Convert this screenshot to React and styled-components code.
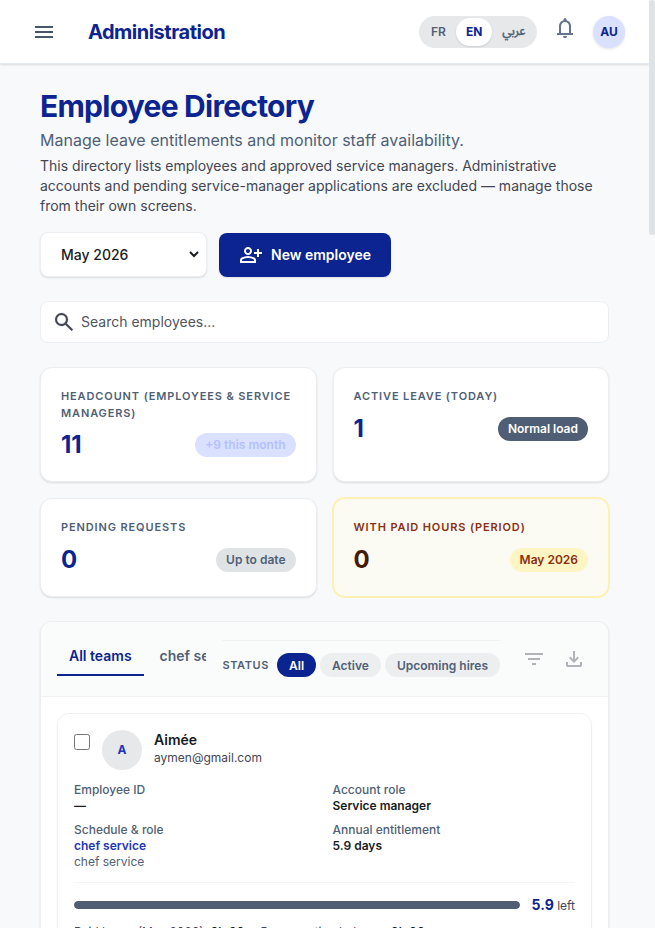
import React from 'react';
import styled, { createGlobalStyle } from 'styled-components';

const GlobalStyle = createGlobalStyle`
    * {
        box-sizing: border-box;
    }
    body {
        margin: 0;
        height: 928px;
        overflow: hidden;
        background: #f7f9fb;
        color: #191c1e;
        font-family: Inter, sans-serif;
        font-size: 14px;
        line-height: 20px;
    }
    h1, h2, p {
        margin: 0;
    }
    button, select, input {
        font-family: inherit;
    }
`
const Shell = styled.div`
    display: flex;
    height: 928px;
    overflow: hidden;
`
const Page = styled.div`
    flex: 1;
    min-width: 0;
    height: 928px;
    overflow: hidden;
`
const ScrollTrack = styled.div`
    width: 6px;
    flex: none;
`
const ScrollThumb = styled.div`
    height: 235px;
    border-radius: 10px;
    background: #e0e3e5;
`
const Svg = styled.svg`
    display: block;
    flex: none;
    width: 24px;
    height: 24px;
    fill: currentColor;
`
const TopBar = styled.header`
    height: 64px;
    display: flex;
    align-items: center;
    padding: 0 24px 0 32px;
    background: #fff;
    border-bottom: 1px solid #e2e8f0;
    box-shadow: 0 1px 2px rgba(0, 0, 0, 0.12);
    color: #475569;
`
const Brand = styled.h2`
    margin-left: 32px;
    flex: 1;
    font-size: 20px;
    line-height: 28px;
    font-weight: 700;
    letter-spacing: -0.5px;
    color: #0b2490;
`
const Languages = styled.div`
    display: flex;
    height: 32px;
    width: 118px;
    padding: 2px;
    border-radius: 16px;
    background: #e6e8ea;
`
const Language = styled.button`
    border: 0;
    padding: 0 10px;
    border-radius: 14px;
    font-size: 12px;
    font-weight: ${props => props.$active ? 700 : 600};
    color: ${props => props.$active ? '#0b2490' : '#505f76'};
    background: ${props => props.$active ? '#fff' : 'transparent'};
    box-shadow: ${props => props.$active ? '0 1px 2px rgba(0, 0, 0, 0.12)' : 'none'};
`
const Arabic = styled(Language)`
    font-family: "Noto Sans Arabic", "Noto Kufi Arabic", "Open Sans", sans-serif;
    font-size: 12px;
    -webkit-text-stroke: 0.3px currentColor;
    font-weight: 500;
`
const Bell = styled.div`
    margin: 0 16px;
    padding-bottom: 7px;
    color: #64748b;
`
const UserBadge = styled.div`
    width: 32px;
    height: 32px;
    display: flex;
    align-items: center;
    justify-content: center;
    border-radius: 50%;
    background: #dae0ff;
    box-shadow: 0 1px 3px rgba(0, 0, 0, 0.12);
    color: #0b2490;
    font-size: 12px;
    font-weight: 700;
`
const Main = styled.main`
    padding: 24px 40px;
`
const Title = styled.h1`
    font-size: 30px;
    line-height: 36px;
    font-weight: 700;
    letter-spacing: -0.75px;
    color: #0b2490;
`
const Subtitle = styled.p`
    margin-top: 4px;
    font-size: 16px;
    line-height: 24px;
    color: #505f76;
`
const Note = styled.p`
    margin-top: 4px;
    color: #444653;
`
const Actions = styled.div`
    display: flex;
    align-items: center;
    gap: 12px;
    margin-top: 16px;
`
const MonthBox = styled.div`
    display: flex;
    width: 167px;
    height: 45px;
    padding: 0 4px 0 16px;
    border: 1px solid #eceef2;
    border-radius: 8px;
    background: #fff;
    box-shadow: 0 1px 2px rgba(0, 0, 0, 0.12);
`
const MonthSelect = styled.select`
    flex: 1;
    padding: 0;
    border: 0;
    background: transparent;
    color: #191c1e;
    font-size: 14px;
    font-weight: 500;
`
const PrimaryButton = styled.button`
    display: flex;
    align-items: center;
    gap: 8px;
    height: 44px;
    padding: 0 20px;
    border: 0;
    border-radius: 8px;
    background: #0b2490;
    box-shadow: 0 1px 2px rgba(0, 0, 0, 0.1);
    color: #fff;
    font-size: 14px;
    font-weight: 600;
`
const SearchBox = styled.div`
    display: flex;
    align-items: center;
    gap: 5px;
    height: 42px;
    margin-top: 24px;
    padding: 0 11px;
    border: 1px solid #eceef2;
    border-radius: 8px;
    background: #fff;
    color: #444653;
`
const SearchInput = styled.input`
    flex: 1;
    padding: 0 0 2px;
    border: 0;
    outline: 0;
    background: transparent;
    font-size: 14px;
    &::placeholder {
        color: #505560;
    }
`
const Stats = styled.section`
    display: grid;
    grid-template-columns: 1fr 1fr;
    gap: 16px;
    margin-top: 24px;
`
const StatCard = styled.div`
    padding: 20px;
    border: 1px solid ${props => props.$warm ? '#fef0b4' : '#eceef2'};
    border-radius: 12px;
    background: ${props => props.$warm ? '#fbfaf3' : '#fff'};
    box-shadow: ${props => props.$warm ? '0 0 0 1px #fef0b4' : '0 1px 2px rgba(0, 0, 0, 0.12)'};
    color: ${props => props.$warm ? '#451a03' : '#0b2490'};
`
const StatLabel = styled.p`
    font-size: 11px;
    line-height: 16.5px;
    font-weight: 600;
    letter-spacing: 0.88px;
    text-transform: uppercase;
    color: ${props => props.$warm ? '#8a2f10' : '#505f76'};
`
const StatRow = styled.div`
    display: flex;
    align-items: center;
    justify-content: space-between;
    margin-top: 8px;
`
const StatValue = styled.span`
    font-size: 24px;
    line-height: 32px;
    font-weight: 700;
`
const pillTones = {
    faint: ['#dae0ff', '#b3c0ff'],
    slate: ['#4f5e75', '#fff'],
    grey: ['#e0e3e5', '#505f76'],
    amber: ['#fef5c5', '#8a2f10'],
}
const StatPill = styled.span`
    padding: 4px 10px;
    border-radius: 12px;
    font-size: 12px;
    line-height: 16px;
    font-weight: 600;
    background: ${props => pillTones[props.$tone][0]};
    color: ${props => pillTones[props.$tone][1]};
`
const Panel = styled.section`
    margin-top: 24px;
    border: 1px solid #eceef2;
    border-radius: 12px;
    background: #fff;
    box-shadow: 0 1px 2px rgba(0, 0, 0, 0.12);
    overflow: hidden;
`
const PanelHeader = styled.div`
    display: flex;
    align-items: center;
    gap: 16px;
    padding: 16px;
    border-bottom: 1px solid #eff1f3;
    background: #fafcfb;
`
const Tabs = styled.div`
    display: flex;
    flex: 1;
    min-width: 0;
    gap: 4px;
    padding-bottom: 4px;
    overflow: hidden;
`
const Tab = styled.button`
    flex: none;
    padding: 8px 12px;
    border: 0;
    border-bottom: 2px solid ${props => props.$active ? '#0b2490' : 'transparent'};
    background: transparent;
    font-size: 14px;
    line-height: 20px;
    font-weight: 600;
    color: ${props => props.$active ? '#0b2490' : '#505f76'};
`
const Filters = styled.div`
    display: flex;
    align-items: center;
    flex: none;
    gap: 4px;
    padding-top: 12px;
    border-top: 1px solid #f0f2f3;
`
const FilterLabel = styled.span`
    margin-right: 4px;
    font-size: 11px;
    line-height: 16px;
    font-weight: 600;
    letter-spacing: 0.6px;
    text-transform: uppercase;
    color: #505f76;
`
const FilterPill = styled.button`
    height: 24px;
    padding: 0 12px;
    border: 0;
    border-radius: 12px;
    font-size: 12px;
    font-weight: 600;
    background: ${props => props.$active ? '#0b2490' : '#eceef0'};
    color: ${props => props.$active ? '#fff' : '#505f76'};
`
const Tools = styled.div`
    display: flex;
    flex: none;
    gap: 4px;
`
const ToolButton = styled.button`
    padding: 6px;
    border: 0;
    background: transparent;
    color: #b1b3b9;
`
const List = styled.div`
    padding: 16px;
`
const EmployeeCard = styled.article`
    padding: 16px;
    border: 1px solid #f0f1f4;
    border-radius: 12px;
    background: #fff;
    box-shadow: 0 1px 2px rgba(0, 0, 0, 0.05);
`
const Person = styled.div`
    display: flex;
    gap: 12px;
`
const Check = styled.input`
    width: 16px;
    height: 16px;
    margin: 4px 0 0;
`
const Avatar = styled.div`
    width: 40px;
    height: 40px;
    display: flex;
    align-items: center;
    justify-content: center;
    border-radius: 50%;
    background: #e6e8ea;
    color: #1e36b4;
    font-size: 12px;
    font-weight: 700;
`
const Name = styled.p`
    font-size: 14px;
    line-height: 20px;
    font-weight: 600;
`
const Email = styled.p`
    font-size: 12px;
    line-height: 16px;
    color: #444653;
`
const Fields = styled.div`
    display: grid;
    grid-template-columns: 1fr 1fr;
    gap: 8px 16px;
    margin-top: 12px;
    font-size: 12px;
    line-height: 16px;
`
const FieldLabel = styled.p`
    color: #505f76;
    font-weight: 500;
`
const FieldValue = styled.p`
    font-weight: 600;
    color: ${props => props.$link ? '#1e36b4' : '#191c1e'};
`
const FieldHint = styled.p`
    color: #505f76;
`
const Balance = styled.div`
    display: flex;
    align-items: center;
    gap: 12px;
    margin-top: 12px;
    padding-top: 12px;
    border-top: 1px solid #f4f5f7;
`
const Track = styled.div`
    flex: 1;
    height: 8px;
    border-radius: 4px;
    background: #eceef0;
    overflow: hidden;
`
const Fill = styled.div`
    height: 8px;
    border-radius: 4px;
    background: #4f5e75;
`
const Left = styled.span`
    font-size: 12px;
    line-height: 20px;
    color: #444653;
    b {
        font-size: 14px;
        color: #0b2490;
    }
`
const Hours = styled.div`
    display: flex;
    gap: 16px;
    margin-top: 8px;
    font-size: 12px;
    line-height: 16px;
    color: #444653;
    b {
        font-weight: 600;
        color: #191c1e;
    }
`

const icons = {
    menu: 'M120-240v-80h720v80H120Zm0-200v-80h720v80H120Zm0-200v-80h720v80H120Z',
    bell: 'M160-200v-80h80v-280q0-83 50-147.5T420-792v-28q0-25 17.5-42.5T480-880q25 0 42.5 17.5T540-820v28q80 20 130 84.5T720-560v280h80v80H160Zm320-300Zm0 420q-33 0-56.5-23.5T400-160h160q0 33-23.5 56.5T480-80ZM320-280h320v-280q0-66-47-113t-113-47q-66 0-113 47t-47 113v280Z',
    personAdd: 'M720-400v-120H600v-80h120v-120h80v120h120v80H800v120h-80Zm-360-80q-66 0-113-47t-47-113q0-66 47-113t113-47q66 0 113 47t47 113q0 66-47 113t-113 47ZM40-160v-112q0-34 17.5-62.5T104-378q62-31 126-46.5T360-440q66 0 130 15.5T616-378q29 15 46.5 43.5T680-272v112H40Zm80-80h480v-32q0-11-5.5-20T580-306q-54-27-109-40.5T360-360q-56 0-111 13.5T140-306q-9 5-14.5 14t-5.5 20v32Zm240-320q33 0 56.5-23.5T440-640q0-33-23.5-56.5T360-720q-33 0-56.5 23.5T280-640q0 33 23.5 56.5T360-560Z',
    search: 'M784-120 532-372q-30 24-69 38t-83 14q-109 0-184.5-75.5T120-580q0-109 75.5-184.5T380-840q109 0 184.5 75.5T640-580q0 44-14 83t-38 69l252 252-56 56ZM380-400q75 0 127.5-52.5T560-580q0-75-52.5-127.5T380-760q-75 0-127.5 52.5T200-580q0 75 52.5 127.5T380-400Z',
    filter: 'M400-240v-80h160v80H400ZM240-440v-80h480v80H240ZM120-640v-80h720v80H120Z',
    download: 'M480-320 280-520l56-58 104 104v-326h80v326l104-104 56 58-200 200ZM240-160q-33 0-56.5-23.5T160-240v-120h80v120h480v-120h80v120q0 33-23.5 56.5T720-160H240Z',
}

const Icon = (props) => {
    return (
        <Svg viewBox="0 -960 960 960">
            <path d={icons[props.name]} stroke="currentColor" strokeWidth={props.bold ? 8 : 0}/>
        </Svg>
    )
}

const stats = [
    { label: 'Headcount (employees & service managers)', value: 11, pill: '+9 this month', tone: 'faint' },
    { label: 'Active leave (today)', value: 1, pill: 'Normal load', tone: 'slate' },
    { label: 'Pending requests', value: 0, pill: 'Up to date', tone: 'grey' },
    { label: 'With paid hours (period)', value: 0, pill: 'May 2026', tone: 'amber' },
]

const Stat = (props) => {
    const warm = props.tone === 'amber'
    return (
        <StatCard $warm={warm}>
            <StatLabel $warm={warm}>{props.label}</StatLabel>
            <StatRow>
                <StatValue>{props.value}</StatValue>
                <StatPill $tone={props.tone}>{props.pill}</StatPill>
            </StatRow>
        </StatCard>
    )
}

const Field = (props) => {
    return (
        <div>
            <FieldLabel>{props.label}</FieldLabel>
            <FieldValue $link={props.link}>{props.value}</FieldValue>
            {props.hint &&
                <FieldHint>{props.hint}</FieldHint>
            }
        </div>
    )
}

const Employee = (props) => {
    return (
        <EmployeeCard>
            <Person>
                <Check type="checkbox"/>
                <Avatar>{props.name[0]}</Avatar>
                <div>
                    <Name>{props.name}</Name>
                    <Email>{props.email}</Email>
                </div>
            </Person>
            <Fields>
                <Field label="Employee ID" value="—"/>
                <Field label="Account role" value="Service manager"/>
                <Field label="Schedule & role" value="chef service" hint="chef service" link/>
                <Field label="Annual entitlement" value="5.9 days"/>
            </Fields>
            <Balance>
                <Track>
                    <Fill style={{ width: `${props.percent}%` }}/>
                </Track>
                <Left><b>5.9</b> left</Left>
            </Balance>
            <Hours>
                <span>Paid hours (May 2026): <b>0h 00</b></span>
                <span>Recuperation balance: <b>0h 00</b></span>
            </Hours>
        </EmployeeCard>
    )
}

const App = () => {
    return (
        <Shell>
            <GlobalStyle/>
            <Page>
                <TopBar>
                    <Icon name="menu"/>
                    <Brand>Administration</Brand>
                    <Languages>
                        <Language>FR</Language>
                        <Language $active>EN</Language>
                        <Arabic>عربي</Arabic>
                    </Languages>
                    <Bell><Icon name="bell"/></Bell>
                    <UserBadge>AU</UserBadge>
                </TopBar>
                <Main>
                    <Title>Employee Directory</Title>
                    <Subtitle>Manage leave entitlements and monitor staff availability.</Subtitle>
                    <Note>
                        This directory lists employees and approved service managers. Administrative
                        accounts and pending service-manager applications are excluded — manage those
                        from their own screens.
                    </Note>
                    <Actions>
                        <MonthBox>
                            <MonthSelect>
                                <option>May 2026</option>
                            </MonthSelect>
                        </MonthBox>
                        <PrimaryButton>
                            <Icon name="personAdd"/>
                            New employee
                        </PrimaryButton>
                    </Actions>
                    <SearchBox>
                        <Icon name="search" bold/>
                        <SearchInput placeholder="Search employees..."/>
                    </SearchBox>
                    <Stats>
                        {stats.map(stat => <Stat key={stat.label} {...stat}/>)}
                    </Stats>
                    <Panel>
                        <PanelHeader>
                            <Tabs>
                                <Tab $active>All teams</Tab>
                                <Tab>chef service</Tab>
                            </Tabs>
                            <Filters>
                                <FilterLabel>Status</FilterLabel>
                                <FilterPill $active>All</FilterPill>
                                <FilterPill>Active</FilterPill>
                                <FilterPill>Upcoming hires</FilterPill>
                            </Filters>
                            <Tools>
                                <ToolButton><Icon name="filter"/></ToolButton>
                                <ToolButton><Icon name="download"/></ToolButton>
                            </Tools>
                        </PanelHeader>
                        <List>
                            <Employee name="Aimée" email="aymen@gmail.com" percent={100}/>
                        </List>
                    </Panel>
                </Main>
            </Page>
            <ScrollTrack>
                <ScrollThumb/>
            </ScrollTrack>
        </Shell>
    )
}

export default App;
